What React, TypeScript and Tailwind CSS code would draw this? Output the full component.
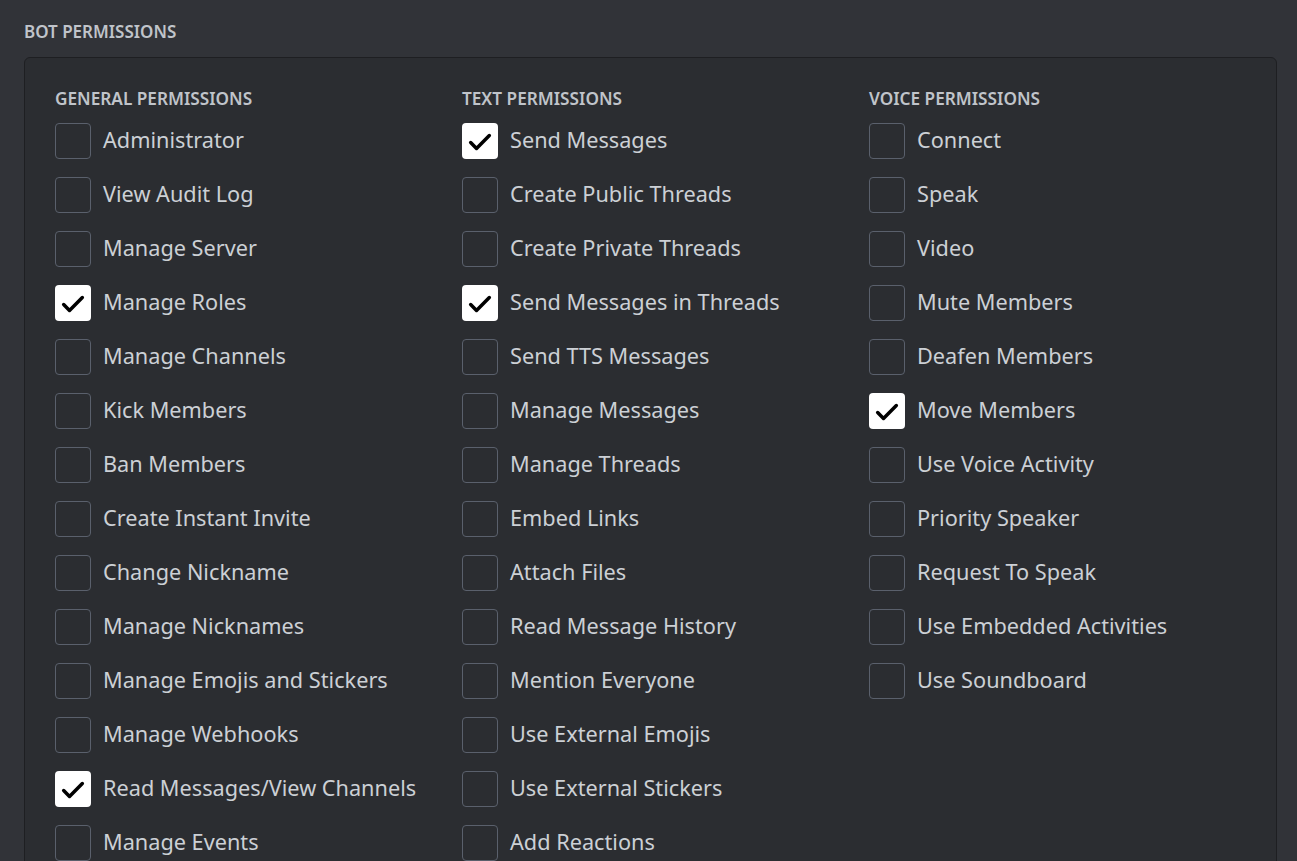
import { useState } from "react";

const general = [
  ["Administrator", false],
  ["View Audit Log", false],
  ["Manage Server", false],
  ["Manage Roles", true],
  ["Manage Channels", false],
  ["Kick Members", false],
  ["Ban Members", false],
  ["Create Instant Invite", false],
  ["Change Nickname", false],
  ["Manage Nicknames", false],
  ["Manage Emojis and Stickers", false],
  ["Manage Webhooks", false],
  ["Read Messages/View Channels", true],
  ["Manage Events", false],
] as [string, boolean][];

const text = [
  ["Send Messages", true],
  ["Create Public Threads", false],
  ["Create Private Threads", false],
  ["Send Messages in Threads", true],
  ["Send TTS Messages", false],
  ["Manage Messages", false],
  ["Manage Threads", false],
  ["Embed Links", false],
  ["Attach Files", false],
  ["Read Message History", false],
  ["Mention Everyone", false],
  ["Use External Emojis", false],
  ["Use External Stickers", false],
  ["Add Reactions", false],
] as [string, boolean][];

const voice = [
  ["Connect", false],
  ["Speak", false],
  ["Video", false],
  ["Mute Members", false],
  ["Deafen Members", false],
  ["Move Members", true],
  ["Use Voice Activity", false],
  ["Priority Speaker", false],
  ["Request To Speak", false],
  ["Use Embedded Activities", false],
  ["Use Soundboard", false],
] as [string, boolean][];

function Row({ label, initial }: { label: string; initial: boolean }) {
  const [on, setOn] = useState(initial);
  return (
    <button
      type="button"
      onClick={() => setOn(!on)}
      className="flex h-[36px] items-center gap-3 text-left"
    >
      {on ? (
        <span className="flex h-[36px] w-[36px] shrink-0 items-center justify-center rounded-[4px] bg-white">
          <svg width="28" height="28" viewBox="0 0 24 24" fill="none" className="mt-[2px]">
            <path
              d="M4 12.5l5 5L20 6.5"
              stroke="#000"
              strokeWidth="3"
              strokeLinecap="round"
              strokeLinejoin="round"
            />
          </svg>
        </span>
      ) : (
        <span className="h-[36px] w-[36px] shrink-0 rounded-[4px] border border-[#5a606c]" />
      )}
      <span className="-mt-[2px] text-[21.7px] leading-none text-[#ccd0d5]">{label}</span>
    </button>
  );
}

function Column({ title, items }: { title: string; items: [string, boolean][] }) {
  return (
    <div className="flex flex-col">
      <div className="mb-[14px] mt-px text-[17.2px] font-semibold leading-5 text-[#c0c4ca]">{title}</div>
      <div className="flex flex-col gap-[18px]">
        {items.map(([l, c]) => (
          <Row key={l} label={l} initial={c} />
        ))}
      </div>
    </div>
  );
}

export default function App() {
  return (
    <div
      className="h-[861px] overflow-hidden bg-[#313338] pl-6 pr-5 pt-[22px]"
      style={{ fontFamily: '"Noto Sans", "Open Sans", sans-serif' }}
    >
      <div className="mb-[15px] text-[17px] font-semibold leading-5 text-[#c0c4ca]">BOT PERMISSIONS</div>
      <div className="rounded-[6px] border border-[#1e1f22] bg-[#2b2d31] pb-10 pl-[30px] pt-[30px]">
        <div className="grid grid-cols-[407px_407px_407px]">
          <Column title="GENERAL PERMISSIONS" items={general} />
          <Column title="TEXT PERMISSIONS" items={text} />
          <Column title="VOICE PERMISSIONS" items={voice} />
        </div>
      </div>
    </div>
  );
}
